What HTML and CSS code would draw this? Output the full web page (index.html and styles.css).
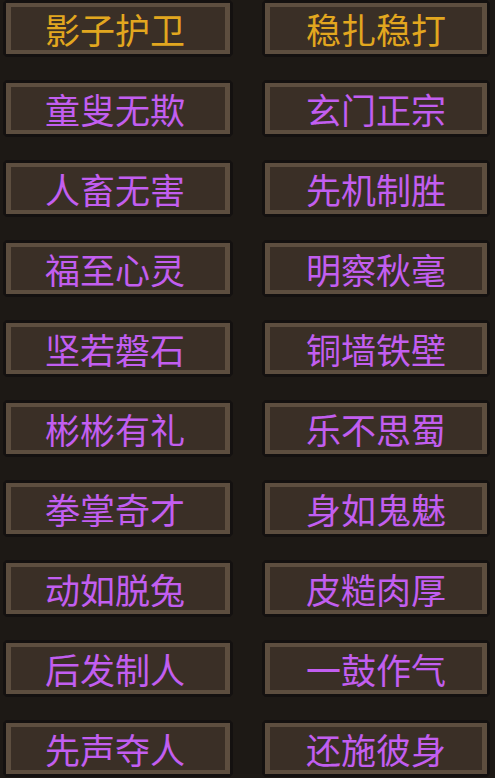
FILE: index.html
```html
<!DOCTYPE html>
<html lang="zh-CN">
<head>
    <meta charset="UTF-8">
    <meta name="viewport" content="width=device-width, initial-scale=1.0">
    <title>称号</title>
    <link rel="stylesheet" href="styles.css">
</head>
<body>
    <div id="titles">
        <div class="slot"><div class="face gold">影子护卫</div></div>
        <div class="slot"><div class="face gold">稳扎稳打</div></div>
        <div class="slot"><div class="face">童叟无欺</div></div>
        <div class="slot"><div class="face">玄门正宗</div></div>
        <div class="slot"><div class="face">人畜无害</div></div>
        <div class="slot"><div class="face">先机制胜</div></div>
        <div class="slot"><div class="face">福至心灵</div></div>
        <div class="slot"><div class="face">明察秋毫</div></div>
        <div class="slot"><div class="face">坚若磐石</div></div>
        <div class="slot"><div class="face">铜墙铁壁</div></div>
        <div class="slot"><div class="face">彬彬有礼</div></div>
        <div class="slot"><div class="face">乐不思蜀</div></div>
        <div class="slot"><div class="face">拳掌奇才</div></div>
        <div class="slot"><div class="face">身如鬼魅</div></div>
        <div class="slot"><div class="face">动如脱兔</div></div>
        <div class="slot"><div class="face">皮糙肉厚</div></div>
        <div class="slot"><div class="face">后发制人</div></div>
        <div class="slot"><div class="face">一鼓作气</div></div>
        <div class="slot"><div class="face">先声夺人</div></div>
        <div class="slot"><div class="face">还施彼身</div></div>
    </div>
</body>
</html>
```

FILE: styles.css
```css
* {
    margin: 0;
    padding: 0;
    box-sizing: border-box;
}
body {
    background-color: #1d1915;
    font-family: "Noto Sans CJK SC", "Noto Sans", sans-serif;
    overflow: hidden;
}
#titles {
    display: grid;
    grid-template-columns: 230px 228px;
    grid-auto-rows: 57px;
    column-gap: 29px;
    row-gap: 23px;
    padding: 0 5px 0 3px;
}
/* dark outline with the corners knocked off */
.slot {
    background-color: #141110;
    padding: 3px;
    clip-path: polygon(3px 0, calc(100% - 3px) 0, 100% 3px, 100% calc(100% - 3px),
        calc(100% - 3px) 100%, 3px 100%, 0 calc(100% - 3px), 0 3px);
}
.slot:nth-child(odd) .face {
    padding-right: 6px;
}
.face {
    height: 100%;
    background-color: #3a2f26;
    border: solid #5d4e3f;
    border-width: 4px 5px;
    display: flex;
    align-items: center;
    justify-content: center;
    padding-bottom: 1px;
    font-size: 35px;
    color: #c25ef0;
}
.gold {
    color: #e2a71f;
}
```
